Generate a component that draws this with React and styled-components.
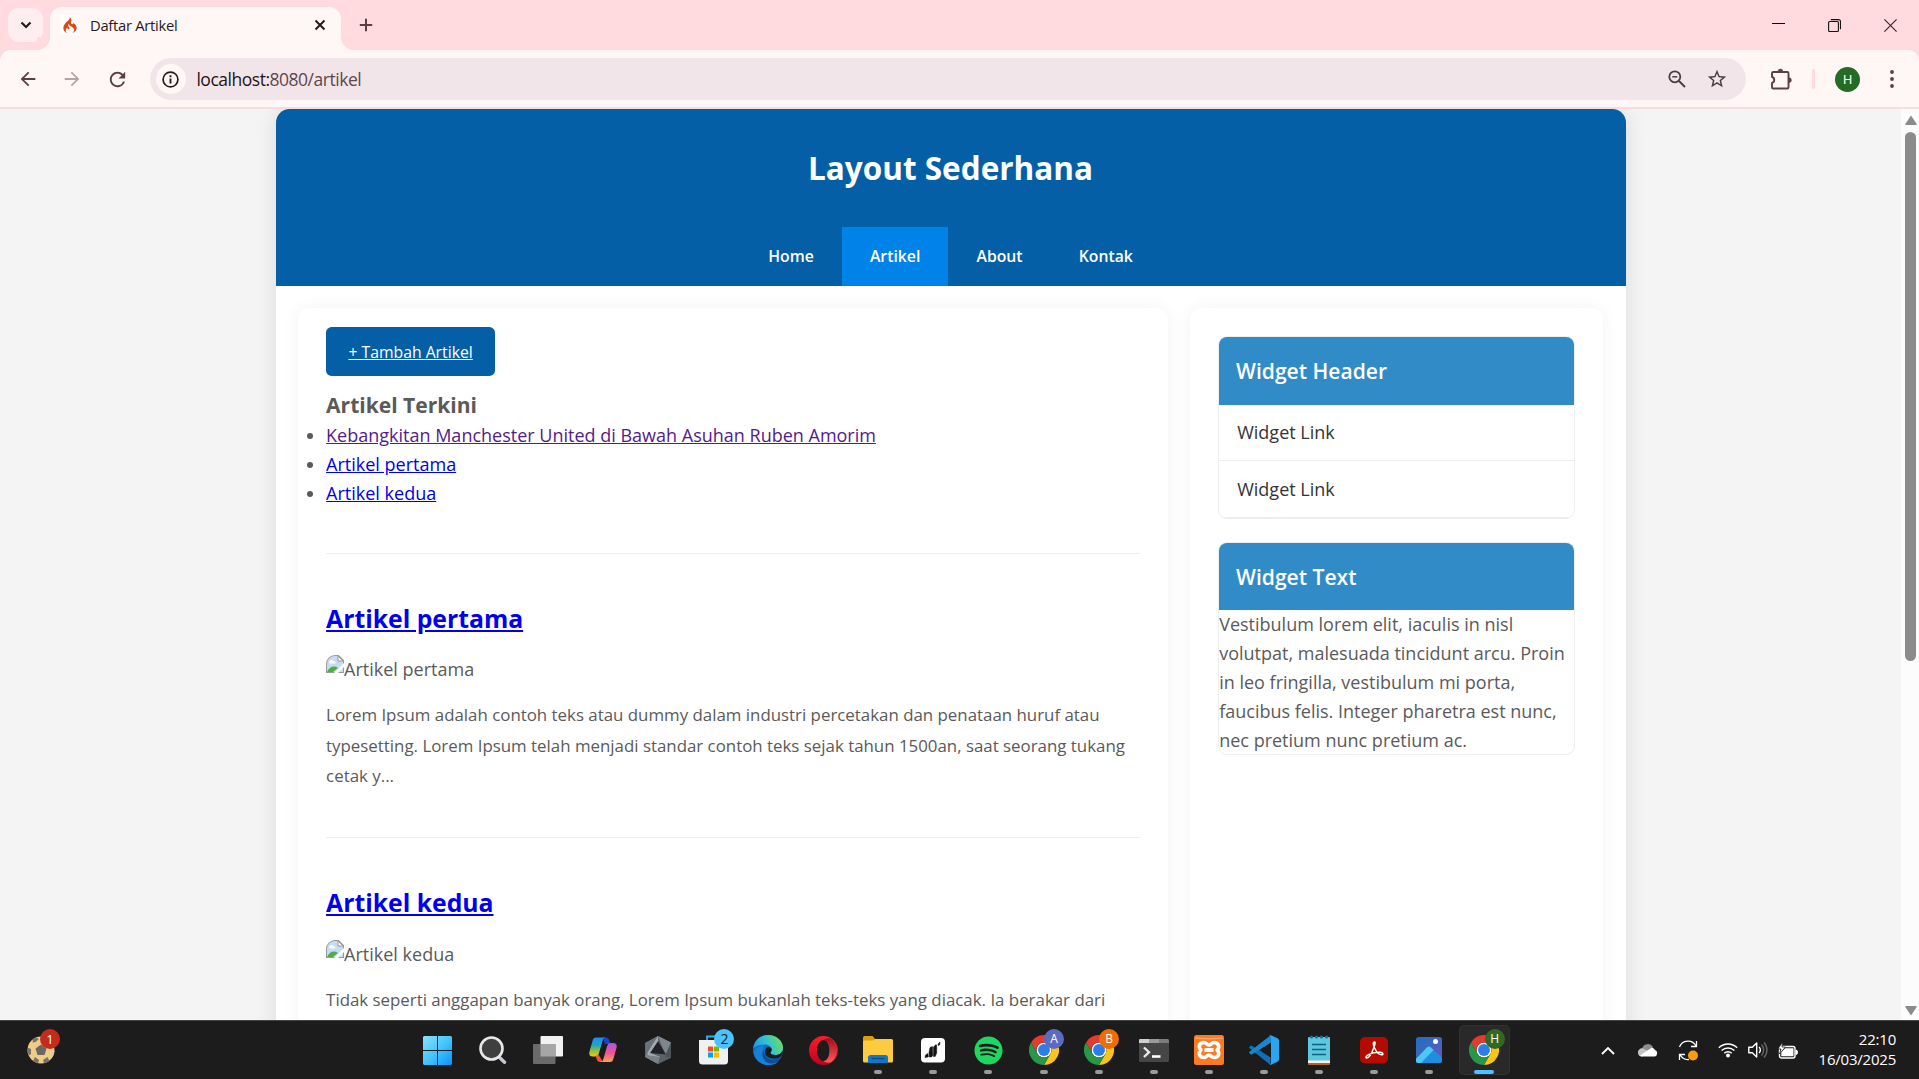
import React from "react";
import styled, { createGlobalStyle } from "styled-components";
import { SiCodeigniter } from "react-icons/si";
import { FaSpotify } from "react-icons/fa";

const GlobalStyle = createGlobalStyle`
  * { box-sizing: border-box; margin: 0; padding: 0; }
  html, body { height: 100%; overflow: hidden; }
  body { font-family: "Open Sans", "Noto Sans", sans-serif; background: #f4f4f4; }
  #root { height: 100vh; }
  svg { display: block; flex: none; }
`;

const Screen = styled.div`
  display: flex;
  flex-direction: column;
  width: 1919px;
  height: 1079px;
  overflow: hidden;
`;

/* ---------- browser chrome ---------- */

const TabStrip = styled.div`
  display: flex;
  align-items: center;
  height: 50px;
  padding-left: 8px;
  background: #ffdade;
  flex: none;
`;

const TabSearch = styled.div`
  display: grid;
  place-items: center;
  width: 35px;
  height: 34px;
  border-radius: 11px;
  background: #ffeef0;
`;

const Tab = styled.div`
  position: relative;
  display: flex;
  align-items: center;
  align-self: flex-end;
  width: 291px;
  height: 43px;
  margin-left: 7px;
  padding: 0 15px 7px 10px;
  border-radius: 12px 12px 0 0;
  background: #fff7f6;

  &::before,
  &::after {
    content: "";
    position: absolute;
    bottom: 0;
    width: 13px;
    height: 13px;
  }
  &::before {
    left: -13px;
    background: radial-gradient(circle at 0 0, #ffdade 12.5px, #fff7f6 13.5px);
  }
  &::after {
    right: -13px;
    background: radial-gradient(circle at 100% 0, #ffdade 12.5px, #fff7f6 13.5px);
  }
`;

const Favicon = styled.div`
  display: grid;
  place-items: center;
  width: 20px;
  height: 20px;
  background: #fff;
  color: #dd4814;
`;

const TabTitle = styled.span`
  flex: 1;
  margin-left: 10px;
  color: #2a1a1d;
  font-size: 14.8px;
  line-height: 20px;
  letter-spacing: -0.3px;
`;

const NewTab = styled.div`
  display: grid;
  place-items: center;
  width: 28px;
  height: 28px;
  margin-left: 11px;
`;

const WindowButtons = styled.div`
  display: flex;
  margin-left: auto;
`;

const WindowButton = styled.div`
  display: grid;
  place-items: center;
  width: ${(p) => p.$w || 57}px;
  height: 50px;
`;

const ToolbarBack = styled.div`
  flex: none;
  background: #ffdade;
`;

const Toolbar = styled.div`
  display: flex;
  align-items: center;
  height: 59px;
  padding: 1px 15px 0 16px;
  border-bottom: 2px solid #f8dcdf;
  border-radius: 11px 11px 0 0;
  background: #fff7f6;
`;

const ToolIcon = styled.div`
  display: grid;
  place-items: center;
  width: 24px;
  height: 24px;
  margin-left: ${(p) => p.$ml || 0}px;
`;

const Omnibox = styled.div`
  display: flex;
  align-items: center;
  width: 1598px;
  height: 42px;
  margin-left: 20px;
  padding: 0 17px 0 6px;
  border-radius: 21px;
  background: #f2e5e9;
`;

const SiteInfo = styled.div`
  display: grid;
  place-items: center;
  width: 30px;
  height: 30px;
  border-radius: 50%;
  background: #fff7f6;
`;

const Url = styled.span`
  flex: 1;
  margin-left: 10.5px;
  color: #5e474c;
  font-size: 17.5px;
  line-height: 24px;
  letter-spacing: -0.48px;
  b { color: #1f1416; font-weight: 400; }
`;

const Divider = styled.div`
  width: 3px;
  height: 20px;
  margin-left: 19px;
  border-radius: 2px;
  background: #ffdade;
`;

const Avatar = styled.div`
  display: grid;
  place-items: center;
  width: 25px;
  height: 25px;
  margin-left: 20px;
  border-radius: 50%;
  background: #246b25;
  color: #fff;
  font: 400 13px/25px Roboto, sans-serif;
`;

/* ---------- web page ---------- */

const Viewport = styled.div`
  display: flex;
  height: 911px;
  flex: none;
  overflow: hidden;
  background: #f4f4f4;
`;

const PageBody = styled.div`
  flex: 1;
  display: flex;
  justify-content: center;
  align-items: flex-start;
  overflow: hidden;
  color: #5a5a5a;
  font-size: 18px;
  line-height: 28.8px;
`;

const Container = styled.div`
  width: 1350px;
  height: 1200px;
  flex: none;
  border-radius: 13.5px;
  background: #fff;
  box-shadow: 0 0 22.5px rgba(0, 0, 0, 0.1);
  overflow: hidden;
`;

const PageHeader = styled.header`
  height: 177px;
  padding-top: 33.4px;
  background: #045fa7;
  text-align: center;
`;

const SiteTitle = styled.h1`
  height: 84.6px;
  color: #fff;
  font-size: 31.5px;
  line-height: 51.8px;
  font-weight: 700;
`;

const Nav = styled.nav`
  display: flex;
  justify-content: center;
`;

const NavLink = styled.a`
  height: 59px;
  padding: 0 28.1px;
  background: ${(p) => (p.$active ? "#0083e8" : "transparent")};
  color: #fff;
  font-size: 15.75px;
  line-height: 59px;
  font-weight: 600;
`;

const Columns = styled.div`
  display: grid;
  grid-template-columns: 869.6px 412.9px;
  gap: 22.5px;
  padding: 22px 22.5px;
`;

const Card = styled.section`
  height: 1000px;
  padding: ${(p) => p.$top}px 28.1px 0;
  border-radius: 11px;
  background: #fff;
  box-shadow: 0 0 16.9px rgba(0, 0, 0, 0.05);
`;

const AddButton = styled.a`
  display: block;
  width: 169px;
  height: 49px;
  border-radius: 5.6px;
  background: #045fa7;
  color: #fff;
  font-size: 15.75px;
  line-height: 50px;
  text-align: center;
  text-decoration: underline;
`;

const RecentTitle = styled.h3`
  margin-top: 13.4px;
  font-size: 21.06px;
  line-height: 31.8px;
  font-weight: 700;
`;

const RecentList = styled.ul`
  list-style: disc;
`;

const Link = styled.a`
  color: ${(p) => (p.$visited ? "#551a8b" : "#0000ee")};
  text-decoration: underline;
`;

const Rule = styled.hr`
  height: 1px;
  margin: 45.4px 0 45px;
  border: 0;
  background: #eee;
`;

const ArticleTitle = styled.h2`
  font-size: 24.75px;
  line-height: 40.3px;
  font-weight: 700;
`;

const BrokenImage = styled.div`
  display: flex;
  margin-top: 15.9px;
  height: 28.8px;
`;

const Excerpt = styled.p`
  margin-top: 16.5px;
  font-size: 16.875px;
  line-height: 30.5px;
`;

const Widget = styled.div`
  margin-bottom: 22.5px;
  border: 1px solid #eee;
  border-radius: 9px;
  overflow: hidden;
`;

const WidgetTitle = styled.h3`
  height: 67.5px;
  padding: 16.9px;
  background: #318bc7;
  color: #fff;
  font-size: 21.06px;
  line-height: 34.2px;
  font-weight: 600;
`;

const WidgetLink = styled.a`
  display: block;
  height: 56.9px;
  padding: 13.5px 18px;
  border-bottom: 1px solid #eee;
  color: #333;
`;

const Scrollbar = styled.div`
  display: flex;
  flex-direction: column;
  align-items: center;
  width: 18px;
  padding: 6px 0 4px 1px;
  background: #fcfcfc;
`;

const Thumb = styled.div`
  width: 11px;
  height: 529px;
  margin: 7px 0 auto;
  border-radius: 6px;
  background: #8b8b8b;
`;

/* ---------- taskbar ---------- */

const Taskbar = styled.div`
  display: flex;
  align-items: center;
  flex: 1;
  border-top: 1px solid #434343;
  background: #1c1c1c;
  color: #fff;
`;

const NewsSlot = styled.div`
  position: relative;
  width: 30px;
  margin-left: 27px;
`;

const Apps = styled.div`
  display: flex;
  margin-left: 353px;
`;

const AppButton = styled.div`
  position: relative;
  display: grid;
  place-items: center;
  width: 51.1px;
  height: 50px;
  margin: 0 2px;
  border-radius: 5px;
  background: ${(p) => (p.$active ? "#292929" : "transparent")};
  box-shadow: ${(p) => (p.$active ? "inset 0 0 0 1px #313131" : "none")};

  &::after {
    content: "";
    position: absolute;
    bottom: 1px;
    left: 50%;
    width: ${(p) => (p.$active ? 20 : 8)}px;
    height: 4px;
    border-radius: 2px;
    transform: translateX(-50%);
    display: ${(p) => (p.$running || p.$active ? "block" : "none")};
    background: ${(p) => (p.$active ? "#4cc2ff" : "#9a9a9a")};
  }
`;

const Badge = styled.span`
  position: absolute;
  top: ${(p) => p.$top}px;
  left: ${(p) => p.$left}px;
  width: 20px;
  height: 20px;
  border-radius: 50%;
  background: ${(p) => p.$bg};
  color: ${(p) => p.$fg || "#fff"};
  font: 400 ${(p) => p.$size || 12}px/20px "Open Sans", sans-serif;
  text-align: center;
`;

const Tray = styled.div`
  display: flex;
  align-items: center;
  margin-left: auto;
  padding-right: 23px;
`;

const TrayIcon = styled.div`
  display: grid;
  place-items: center;
  width: ${(p) => p.$w}px;
`;

const Clock = styled.div`
  width: 88px;
  padding-bottom: 2px;
  font-size: 15px;
  line-height: 20px;
  letter-spacing: -0.22px;
  text-align: right;
  white-space: nowrap;
`;

/* ---------- icons ---------- */

const INK = "#5b3f45";

const BrokenImageIcon = () => (
  <svg width="18" height="18" viewBox="0 0 18 18">
    <defs>
      <clipPath id="round"><path d="M0 9a9 9 0 0 1 9-9h4l5 5v13H0z" /></clipPath>
    </defs>
    <g clipPath="url(#round)">
      <path d="M0 0h13l5 5v13H0z" fill="#9a9a9a" />
      <path d="M1 9a8 8 0 0 1 8-8h3l5 5v11H1z" fill="#c6dbf7" />
      <path d="M3 7.500c0-3 4-3.500 5-1 2 0 2 2 .5 2H3.500z" fill="#fff" />
      <path d="M1 17c2-5 7-7 11-4l-5 4z" fill="#4caf3f" />
      <path d="M12 1v5h5z" fill="#fff" stroke="#9a9a9a" />
      <path d="M8 18 18 8v4l-6 6z" fill="#fff" />
    </g>
  </svg>
);

const ChromeIcon = () => (
  <svg width="30" height="30" viewBox="0 0 48 48">
    <circle cx="24" cy="24" r="12" fill="#fff" />
    <path d="M24 12H44.780a23.990 23.990 0 0 0-41.560 0L13.608 30l.009-.002A11.985 11.985 0 0 1 24 12Z" fill="#e33b2e" />
    <path d="M34.391 30.003 24 48A23.994 23.994 0 0 0 44.780 12.003H24A11.985 11.985 0 0 1 34.391 30.003Z" fill="#fcc419" />
    <path d="M13.609 30.003 3.218 12.006A23.994 23.994 0 0 0 24.002 48L34.393 30.003a11.985 11.985 0 0 1-20.784 0Z" fill="#279847" />
    <circle cx="24" cy="24" r="9.500" fill="#2b7de9" />
  </svg>
);

const StartIcon = () => (
  <svg width="29" height="29" viewBox="0 0 29 29">
    <defs>
      <linearGradient id="win" x1="0" y1="0" x2="29" y2="29" gradientUnits="userSpaceOnUse">
        <stop offset="0" stopColor="#8be0fc" />
        <stop offset="0.5" stopColor="#45c6fb" />
        <stop offset="1" stopColor="#0a93fb" />
      </linearGradient>
    </defs>
    <path d="M1 0h13v14H0V1zM15 0h13l1 1v13H15zM0 15h14v14H1l-1-1zM15 15h14v13l-1 1H15z" fill="url(#win)" />
  </svg>
);

const SearchIcon = () => (
  <svg width="28" height="28" viewBox="0 0 28 28">
    <path d="m19 20 6.500 6.300" stroke="#c4c8cf" strokeWidth="3.400" strokeLinecap="round" />
    <circle cx="12.500" cy="12.500" r="11" fill="#3f3f3f" stroke="#e6e8eb" strokeWidth="2.600" />
  </svg>
);

const TaskViewIcon = () => (
  <svg width="30" height="28" viewBox="0 0 30 28">
    <rect x="7.500" y="0" width="22.500" height="20.500" rx="1" fill="#f2f2f2" />
    <rect x="0" y="8" width="22.500" height="20" rx="1" fill="#6a6a6a" />
    <path d="M7.500 8h15v12.500h-15z" fill="#a6a6a6" />
  </svg>
);

const CopilotIcon = () => (
  <svg width="28" height="26" viewBox="0 0 28 26">
    <defs>
      <linearGradient id="cpA" x1="0" y1="0" x2="0" y2="1">
        <stop offset="0.050" stopColor="#1c8ff0" />
        <stop offset="0.400" stopColor="#21a5c4" />
        <stop offset="0.650" stopColor="#7bbf49" />
        <stop offset="1" stopColor="#f5c816" />
      </linearGradient>
      <linearGradient id="cpB" x1="0" y1="0" x2="0" y2="1">
        <stop offset="0" stopColor="#a955ea" />
        <stop offset="0.500" stopColor="#ea5595" />
        <stop offset="1" stopColor="#fda052" />
      </linearGradient>
    </defs>
    <path d="M14 .5h3c2 0 3 1.500 3.500 3.500L21.500 7H16z" fill="#1c42cf" />
    <path d="M7 .5h10c-2 0-2.800 1-3.500 3.500L10 16c-.8 2.500-1.800 3.500-4 3.500H3.500C1 19.500-.3 17.500.5 14.500L3.500 4C4.200 1.500 5 .5 7 .5z" fill="url(#cpA)" />
    <path d="M14 25h-3c-2 0-3-1.500-3.500-3.500L6.500 19l3-1.500z" fill="#f2552d" />
    <path d="M21 25H11c2 0 2.800-1 3.500-3.500L18 9.500C18.800 7 19.800 6 22 6h2.500c2.500 0 3.800 2 3 5l-3 10.500c-.7 2.500-1.500 3.500-3.500 3.500z" fill="url(#cpB)" />
  </svg>
);

const HexIcon = () => (
  <svg width="26" height="28" viewBox="0 0 26 28">
    <path d="M13 0 26 6.500v15L13 28 0 21V7z" fill="#5c646b" />
    <path d="M13 0 0 7l1 13z" fill="#6a7279" />
    <path d="M13 0 26 6.500 20.500 19z" fill="#7e868d" />
    <path d="M26 6.500v15L18 25l3-7z" fill="#4b5259" />
    <path d="M0 21 13 28l2-7.500L1 18z" fill="#7a8289" />
    <path d="M13 28 26 21.500 16 20z" fill="#596067" />
    <path d="M13 5 21 18.500 5 17z" fill="#1f2327" />
    <path d="M13 0 2.500 16.500Q1.500 19 4.500 19.500l11 1.500L5 17l8-12z" fill="#a3abb2" />
  </svg>
);

const StoreIcon = () => (
  <svg width="29" height="30" viewBox="0 0 29 30">
    <path d="M8 6V1.500h12V6" fill="none" stroke="#2bb3e8" strokeWidth="1.800" />
    <path d="M0 5h29v21a3.500 3.500 0 0 1-3.500 3.500h-22A3.500 3.500 0 0 1 0 26z" fill="#f0f0f0" />
    <path d="M9 11.500h5v5H9z" fill="#f25022" />
    <path d="M15 11.500h5v5h-5z" fill="#7fba00" />
    <path d="M9 17.500h5v5H9z" fill="#00a4ef" />
    <path d="M15 17.500h5v5h-5z" fill="#ffb900" />
  </svg>
);

const EdgeIcon = () => (
  <svg width="30" height="30" viewBox="0 0 30 30">
    <defs>
      <linearGradient id="edA" x1="0" y1="0.600" x2="1" y2="0.300">
        <stop offset="0" stopColor="#1a94e0" />
        <stop offset="0.450" stopColor="#31c0d8" />
        <stop offset="1" stopColor="#6ae05a" />
      </linearGradient>
    </defs>
    <circle cx="15" cy="15" r="15" fill="#0f6fc6" />
    <path d="M0 14C1 5.500 7 0 15 0c9 0 15 6.200 15 12.500 0 5-3.500 7.500-7.500 7.500-3 0-5-1-5-2 0-.8 1.200-1.300 1.200-3.500 0-2.800-2.800-5-6.700-5C6 9.500 1 12 0 14z" fill="url(#edA)" />
    <path d="M10 15c-1.500 8 4 13 10 13 2.500 0 5-1 6-2-3 3.500-7 4-11 4C8 30 2 25 1 18c1-5 6-8 11-8.300-1 .8-1.700 2.500-2 5.300z" fill="#1580d4" />
    <path d="M11.500 14c-1.500 6 3 11 9 10.500 3-.2 5.500-1.500 6.500-2-1.500 4-5 6-8.500 6-5.500 0-10-5-8.800-11 .3-1.500 1-2.800 1.800-3.500z" fill="#0b4f9e" />
    <path d="M18.700 14.500c0 2.200-1.200 2.700-1.200 3.500 0 1 2 2 5 2 3 0 6-1.500 7-4.500l.5 3-2.500 3.500c-6 3-16 2-15.500-6 .2-2.500 1.800-4 3.500-4 2 0 3.200 1.200 3.200 2.500z" fill="#1c1c1c" />
  </svg>
);

const OperaIcon = () => (
  <svg width="29" height="29" viewBox="0 0 29 29">
    <defs>
      <linearGradient id="op" x1="0" y1="0" x2="0" y2="1">
        <stop offset="0" stopColor="#ff1b2d" />
        <stop offset="1" stopColor="#b9031d" />
      </linearGradient>
      <linearGradient id="op2" x1="0" y1="0" x2="0" y2="1">
        <stop offset="0" stopColor="#a30d1c" />
        <stop offset="1" stopColor="#ff5a56" />
      </linearGradient>
    </defs>
    <path fillRule="evenodd" d="M14.500 0a14.500 14.500 0 1 0 0 29 14.500 14.500 0 0 0 0-29zm0 4c3.500 0 6 4.500 6 10.500S18 25 14.500 25s-6.500-4.500-6.500-10.500S11 4 14.500 4z" fill="url(#op)" />
    <path d="M14.500 4c2-1.600 5-2 7.500-1.300a14.500 14.500 0 0 1 0 23.600c-2.500.8-5.500.3-7.500-1.300 3.500 0 6-4.500 6-10.500S18 4 14.500 4z" fill="url(#op2)" />
  </svg>
);

const FolderIcon = () => (
  <svg width="30" height="28" viewBox="0 0 30 28">
    <path d="M0 1.500Q0 0 1.500 0h8l3 3.500V8H0z" fill="#d99e09" />
    <path d="M0 6q0-1.500 1.500-1.500H10l2.500-1.500h16Q30 3 30 4.500V25q0 1.500-1.500 1.500h-27Q0 26.500 0 25z" fill="#fdcb3f" />
    <path d="M5 27v-5.500Q5 19 7.500 19h15q2.500 0 2.500 2.500V27z" fill="#1277c9" />
    <path d="M8.500 22.500h13" stroke="#0b4c85" strokeWidth="1.400" />
  </svg>
);

const ChartIcon = () => (
  <svg width="24" height="25" viewBox="0 0 24 25">
    <rect width="24" height="24.500" rx="4" fill="#fff" />
    <path d="M4 19.500 4.500 17 7 15.500l.3 3.500zM8.300 19l-.3-4.500 1-5 2.500-1 .3 9-1.300 1.500zM12.500 18.500V9l2.500-2.500.7 1V15l-1.500 3.500zM17.200 7.500 17 6l2-2-.3 3z" fill="#111" stroke="#111" strokeWidth="0.500" strokeLinejoin="round" />
  </svg>
);

const TerminalIcon = () => (
  <svg width="30" height="23" viewBox="0 0 30 23">
    <rect width="30" height="23" rx="1.500" fill="#464646" />
    <path d="M1.500 0h27Q30 0 30 1.500V4H0V1.500Q0 0 1.500 0z" fill="#7c7c7c" />
    <path d="M0 1.500Q0 0 1.500 0H20v4H0z" fill="#9a9a9a" />
    <path d="M0 1.500Q0 0 1.500 0H10v4H0z" fill="#cfcfcf" />
    <path d="m5 8.500 5 4.700-5 4.800" fill="none" stroke="#e8e8e8" strokeWidth="2.400" />
    <path d="M13 17.500h8.500" stroke="#fff" strokeWidth="2.600" />
  </svg>
);

const XamppIcon = () => (
  <svg width="30" height="30" viewBox="0 0 30 30">
    <rect width="30" height="30" rx="2.500" fill="#fb7a24" />
    <path d="M1.500 3Q15 4.500 28.500 3" stroke="#fda465" strokeWidth="1.600" fill="none" />
    <path d="M10 7.500c2.500 0 3 2.500 5 2.500s2.500-2.500 5-2.500c5 0 6 5 3 7.500 3 2.500 2 7.500-3 7.500-2.500 0-3-2.500-5-2.500s-2.500 2.500-5 2.500c-5 0-6-5-3-7.500-3-2.500-2-7.500 3-7.500z" fill="none" stroke="#fff" strokeWidth="3.600" strokeLinejoin="round" />
    <path d="M10.500 15h9" stroke="#fff" strokeWidth="4" />
  </svg>
);

const CodeIcon = () => (
  <svg width="30" height="30" viewBox="0 0 30 30">
    <path d="M22 0 7.500 14 3 10.700q-.8-.5-1.500 0l-1 1q-.8.8 0 1.600l21 16.700V22.500L10 15l12-8z" fill="#0f6fb8" />
    <path d="m.5 18.300 1 1q.7.600 1.500 0L22 7.500V0L.5 16.700q-.8.800 0 1.600z" fill="#1b86d0" />
    <path d="M20.500.8q.8-.8 2-.3l6 2.800Q30 4 30 5.500v19q0 1.500-1.500 2.200l-6 2.800q-1.200.5-2-.3l1.500-1V1.800z" fill="#2ba5ee" />
  </svg>
);

const NotepadIcon = () => (
  <svg width="22" height="30" viewBox="0 0 22 30">
    <path d="M0 26h22v3q0 1-1 1H1q-1 0-1-1z" fill="#b8641b" />
    <path d="M0 3q0-1 1-1h20q1 0 1 1v24H0z" fill="#5fc6e0" />
    <path d="M0 25.500h22V28H0z" fill="#f4f4f4" />
    <path d="M4 9.500h14M4 14.500h14M4 19.500h14" stroke="#0b6480" strokeWidth="1.700" />
    <g fill="#0c7699"><circle cx="3.500" cy="2" r="1.600" /><circle cx="8.500" cy="2" r="1.600" /><circle cx="13.500" cy="2" r="1.600" /><circle cx="18.500" cy="2" r="1.600" /></g>
  </svg>
);

const AcrobatIcon = () => (
  <svg width="28" height="27" viewBox="0 0 28 27">
    <rect width="28" height="26.500" rx="5" fill="#b30b00" />
    <path d="M14.500 5c-1.800 0-1.500 3 .3 6.500 2 4 5 6.300 7 6.300 1.700 0 1.600-2.300-1.800-2.500-4-.2-8.500.9-11.500 2.400-3 1.500-3 3.300-1.700 3.300 2 0 5-5 6.700-9.500C14.700 8 15.800 5 14.500 5z" fill="none" stroke="#fff" strokeWidth="1.500" />
  </svg>
);

const PhotosIcon = () => (
  <svg width="26" height="26" viewBox="0 0 26 26">
    <defs>
      <linearGradient id="ph" x1="0" y1="0" x2="1" y2="1">
        <stop offset="0" stopColor="#1e6fc4" />
        <stop offset="1" stopColor="#6a58b8" />
      </linearGradient>
      <clipPath id="phc"><rect width="26" height="26" rx="2.500" /></clipPath>
    </defs>
    <g clipPath="url(#phc)">
      <rect width="26" height="26" fill="url(#ph)" />
      <path d="M0 22 11 10.500q2-2 4 0L26 21v5H0z" fill="#1e8fe0" />
      <path d="M0 22 11 10.500q2-2 4 0l2.500 2.500L5 26H0z" fill="#4cc8f7" />
      <circle cx="19.500" cy="4.500" r="2.500" fill="#fff" />
    </g>
  </svg>
);

const BallIcon = () => (
  <svg width="28" height="28" viewBox="0 0 28 28">
    <circle cx="14" cy="14" r="13.500" fill="#efcd85" />
    <path d="m14 8.500 5.500 4-2 6.500h-7l-2-6.500z" fill="#6b6764" />
    <path d="M.7 11.500 4 13v5l-2 1.500A13.500 13.500 0 0 1 .7 11.500zM6 25l2-4 4 3-1 3.200A13.500 13.500 0 0 1 6 25zM17 27.200 16 24l4.500-3 2 4a13.500 13.500 0 0 1-5.500 2.200zM6 3l3-1.500 3 1.500-3.500 3-3 .5z" fill="#77716b" />
    <path d="M24 13q3 1 3.500 2-.8 5-3.500 8z" fill="#d6cdb8" />
  </svg>
);

const apps = [
  { icon: <StartIcon /> },
  { icon: <SearchIcon /> },
  { icon: <TaskViewIcon /> },
  { icon: <CopilotIcon /> },
  { icon: <HexIcon /> },
  { icon: <StoreIcon />, badge: { $bg: "#4cc2ff", $fg: "#10222c", text: "2", $size: 14, $left: 27, $top: 4 } },
  { icon: <EdgeIcon /> },
  { icon: <OperaIcon /> },
  { icon: <FolderIcon />, run: true },
  { icon: <ChartIcon />, run: true },
  { icon: <FaSpotify size={29} color="#1ed760" />, run: true },
  { icon: <ChromeIcon />, run: true, badge: { $bg: "#5c6bc0", text: "A", $left: 26, $top: 4 } },
  { icon: <ChromeIcon />, run: true, badge: { $bg: "#ef6c00", text: "B", $left: 26, $top: 4 } },
  { icon: <TerminalIcon />, run: true },
  { icon: <XamppIcon />, run: true },
  { icon: <CodeIcon />, run: true },
  { icon: <NotepadIcon />, run: true },
  { icon: <AcrobatIcon />, run: true },
  { icon: <PhotosIcon />, run: true },
  { icon: <ChromeIcon />, active: true, badge: { $bg: "#33691e", text: "H", $left: 26, $top: 4 } },
];

function BrowserChrome() {
  return (
    <>
      <TabStrip>
        <TabSearch>
          <svg width="12" height="8" viewBox="0 0 12 8"><path d="m1.500 1.500 4.500 4.500 4.500-4.500" fill="none" stroke="#2a1a1d" strokeWidth="2.200" /></svg>
        </TabSearch>
        <Tab>
          <Favicon><SiCodeigniter size={16} /></Favicon>
          <TabTitle>Daftar Artikel</TabTitle>
          <svg width="12" height="12" viewBox="0 0 12 12"><path d="m1.500 1.500 9 9m0-9-9 9" stroke="#2a1a1d" strokeWidth="2" /></svg>
        </Tab>
        <NewTab>
          <svg width="14" height="14" viewBox="0 0 14 14"><path d="M7 .8v12.400M.8 7h12.400" stroke={INK} strokeWidth="2" /></svg>
        </NewTab>
        <WindowButtons>
          <WindowButton $w={56}><svg width="13" height="13" viewBox="0 0 13 13"><path d="M0 4.500h13" stroke="#000" /></svg></WindowButton>
          <WindowButton $w={56}>
            <svg width="13" height="13" viewBox="0 0 13 13" fill="none" stroke="#111" strokeWidth="1.100">
              <rect x="0.600" y="2.500" width="9.800" height="10" rx="1" />
              <path d="M2.800.6h7.700q2 0 2 2v7.700" />
            </svg>
          </WindowButton>
          <WindowButton><svg width="13" height="13" viewBox="0 0 13 13"><path d="m.4.400 12.200 12.200m0-12.200L.4 12.600" stroke="#3a2a2d" strokeWidth="1.200" /></svg></WindowButton>
        </WindowButtons>
      </TabStrip>
      <ToolbarBack>
        <Toolbar>
          <ToolIcon>
            <svg width="22" height="22" viewBox="0 0 24 24" fill={INK}><path d="M20 11H7.830l5.590-5.590L12 4l-8 8 8 8 1.410-1.410L7.830 13H20v-2z" /></svg>
          </ToolIcon>
          <ToolIcon $ml={20}>
            <svg width="22" height="22" viewBox="0 0 24 24" fill="#b5a5a8"><path d="m12 4-1.410 1.410L16.170 11H4v2h12.170l-5.580 5.590L12 20l8-8z" /></svg>
          </ToolIcon>
          <ToolIcon $ml={22}>
            <svg width="23" height="23" viewBox="0 0 24 24" fill={INK}><path d="M17.650 6.350A7.958 7.958 0 0 0 12 4c-4.420 0-7.990 3.580-7.990 8s3.570 8 7.990 8c3.730 0 6.840-2.550 7.730-6h-2.080A5.990 5.990 0 0 1 12 18c-3.310 0-6-2.690-6-6s2.690-6 6-6c1.660 0 3.140.69 4.220 1.780L13 11h7V4l-2.350 2.350z" /></svg>
          </ToolIcon>
          <Omnibox>
            <SiteInfo>
              <svg width="17" height="17" viewBox="0 0 17 17"><circle cx="8.500" cy="8.500" r="7.400" fill="none" stroke="#2a1a1d" strokeWidth="1.700" /><path d="M8.500 7.500v5M8.500 4.300v1.900" stroke="#2a1a1d" strokeWidth="1.900" /></svg>
            </SiteInfo>
            <Url><b>localhost:</b>8080/artikel</Url>
            <ToolIcon>
              <svg width="18" height="18" viewBox="0 0 18 18" fill="none" stroke="#4d3b40"><circle cx="6.800" cy="6.800" r="5.500" strokeWidth="1.800" /><path d="m11 11 6 6" strokeWidth="2" /><path d="M4.300 6.800h5" strokeWidth="1.500" /></svg>
            </ToolIcon>
            <ToolIcon $ml={16}>
              <svg width="22" height="22" viewBox="0 0 24 24" fill="#4d3b40"><path d="m22 9.240-7.190-.62L12 2 9.190 8.630 2 9.240l5.460 4.730L5.820 21 12 17.270 18.180 21l-1.630-7.030L22 9.240zM12 15.400l-3.760 2.270 1-4.280-3.320-2.880 4.380-.38L12 6.100l1.710 4.040 4.380.38-3.320 2.880 1 4.280L12 15.400z" /></svg>
            </ToolIcon>
          </Omnibox>
          <ToolIcon $ml={23}>
            <svg width="22" height="22" viewBox="0 0 22 22"><path d="M2 9V5.200q0-1.200 1.200-1.200h14q1.300 0 1.300 1.200v14q0 1.300-1.300 1.300h-14Q2 20.500 2 19.200v-4.400a3 3 0 0 0 0-5.800z" fill="none" stroke={INK} strokeWidth="1.900" strokeLinejoin="round" /><path d="M8 3.500a2.400 2.400 0 0 1 4.800 0zM19 9.800a2.400 2.400 0 0 1 0 4.800z" fill={INK} stroke={INK} strokeWidth="0.600" /></svg>
          </ToolIcon>
          <Divider />
          <Avatar>H</Avatar>
          <ToolIcon $ml={20}>
            <svg width="4" height="18" viewBox="0 0 4 18" fill={INK}><circle cx="2" cy="2" r="1.900" /><circle cx="2" cy="9" r="1.900" /><circle cx="2" cy="16" r="1.900" /></svg>
          </ToolIcon>
        </Toolbar>
      </ToolbarBack>
    </>
  );
}

function Article({ title, children }) {
  return (
    <article>
      <Rule />
      <ArticleTitle><Link href="#">{title}</Link></ArticleTitle>
      <BrokenImage><BrokenImageIcon /><span>{title}</span></BrokenImage>
      <Excerpt>{children}</Excerpt>
    </article>
  );
}

function WebPage() {
  return (
    <Viewport>
      <PageBody>
        <Container>
          <PageHeader>
            <SiteTitle>Layout Sederhana</SiteTitle>
            <Nav>
              <NavLink>Home</NavLink>
              <NavLink $active>Artikel</NavLink>
              <NavLink>About</NavLink>
              <NavLink>Kontak</NavLink>
            </Nav>
          </PageHeader>
          <Columns>
            <Card $top={19}>
              <AddButton>+ Tambah Artikel</AddButton>
              <RecentTitle>Artikel Terkini</RecentTitle>
              <RecentList>
                <li><Link $visited>Kebangkitan Manchester United di Bawah Asuhan Ruben Amorim</Link></li>
                <li><Link>Artikel pertama</Link></li>
                <li><Link>Artikel kedua</Link></li>
              </RecentList>
              <Article title="Artikel pertama">
                Lorem Ipsum adalah contoh teks atau dummy dalam industri percetakan dan penataan huruf atau typesetting. Lorem Ipsum telah menjadi standar contoh teks sejak tahun 1500an, saat seorang tukang cetak y...
              </Article>
              <Article title="Artikel kedua">
                Tidak seperti anggapan banyak orang, Lorem Ipsum bukanlah teks-teks yang diacak. Ia berakar dari
              </Article>
            </Card>
            <Card $top={28.1}>
              <Widget>
                <WidgetTitle>Widget Header</WidgetTitle>
                <WidgetLink>Widget Link</WidgetLink>
                <WidgetLink>Widget Link</WidgetLink>
              </Widget>
              <Widget>
                <WidgetTitle>Widget Text</WidgetTitle>
                <p>Vestibulum lorem elit, iaculis in nisl volutpat, malesuada tincidunt arcu. Proin in leo fringilla, vestibulum mi porta, faucibus felis. Integer pharetra est nunc, nec pretium nunc pretium ac.</p>
              </Widget>
            </Card>
          </Columns>
        </Container>
      </PageBody>
      <Scrollbar>
        <svg width="12" height="10" viewBox="0 0 12 10"><path d="M6 .5 11.700 9q.3 1-.7 1H1q-1 0-.7-1z" fill="#8b8b8b" /></svg>
        <Thumb />
        <svg width="12" height="10" viewBox="0 0 12 10"><path d="M6 9.500 11.700 1q.3-1-.7-1H1Q0 0 .3 1z" fill="#8b8b8b" /></svg>
      </Scrollbar>
    </Viewport>
  );
}

export default function App() {
  return (
    <Screen>
      <GlobalStyle />
      <BrowserChrome />
      <WebPage />
      <Taskbar>
        <NewsSlot>
          <BallIcon />
          <Badge $bg="#c42b1c" $top={-7} $left={13} $size={13}>1</Badge>
        </NewsSlot>
        <Apps>
          {apps.map(({ icon, badge, run, active }, i) => (
            <AppButton key={i} $running={run} $active={active}>
              {icon}
              {badge && <Badge {...badge}>{badge.text}</Badge>}
            </AppButton>
          ))}
        </Apps>
        <Tray>
          <TrayIcon $w={40}>
            <svg width="14" height="9" viewBox="0 0 14 9"><path d="m1 8 6-6 6 6" fill="none" stroke="#fff" strokeWidth="1.900" /></svg>
          </TrayIcon>
          <TrayIcon $w={40}>
            <svg width="20" height="14" viewBox="0 0 20 14"><path d="M4 6a6 6 0 0 1 11-2l-5 5z" fill="#8e8e8e" /><path d="M0 10a4 4 0 0 1 5-4.500L12 9l-8 4.500A4 4 0 0 1 0 10z" fill="#c4c4c4" /><path d="M2 12.500 14 4.500a5 5 0 0 1 3 2.500 3.400 3.400 0 0 1-.5 6.500H4q-1.500 0-2-1z" fill="#fff" /></svg>
          </TrayIcon>
          <TrayIcon $w={40}>
            <svg width="20" height="21" viewBox="0 0 20 21" fill="none" stroke="#fff" strokeWidth="1.300"><path d="M1.500 7A9 9 0 0 1 18 6M18.500 1v5.500H13M11 19.500a9 9 0 0 1-9-5M1.500 20v-5.500H7" /><circle cx="15" cy="15.500" r="5" fill="#ff9a0a" stroke="none" /></svg>
          </TrayIcon>
          <TrayIcon $w={40}>
            <svg width="20" height="16" viewBox="0 0 20 16" fill="none" stroke="#fff" strokeWidth="1.400"><path d="M.8 5.800a13 13 0 0 1 18.400 0M3.600 8.600a9 9 0 0 1 12.800 0M6.300 11.300a5.200 5.200 0 0 1 7.400 0" /><circle cx="10" cy="13.500" r="2" fill="#fff" stroke="none" /></svg>
          </TrayIcon>
          <TrayIcon $w={20}>
            <svg width="20" height="18" viewBox="0 0 20 18" fill="none" stroke="#fff" strokeWidth="1.400"><path d="M.8 6.300h3.500L8.700 2v14l-4.400-4.300H.8z" strokeLinejoin="round" /><path d="M11 6a4 4 0 0 1 0 6" /><path d="M13.500 3.500a8 8 0 0 1 0 11M16 1.500a11 11 0 0 1 0 15" stroke="#666" /></svg>
          </TrayIcon>
          <TrayIcon $w={40}>
            <svg width="20" height="17" viewBox="0 0 20 17"><rect x="1.500" y="4.500" width="15.500" height="11.500" rx="2" fill="none" stroke="#fff" strokeWidth="1.400" /><path d="M7 6.300h8.500v8H3.300v-4z" fill="#fff" /><path d="M18 8v4.500q1.500 0 1.500-2.200T18 8z" fill="#fff" stroke="#fff" /><path d="M4.500 0 0 7h3l-1.500 5L7.500 5H4z" fill="#fff" stroke="#1c1c1c" strokeWidth="0.800" /></svg>
          </TrayIcon>
          <Clock>22:10<br />16/03/2025</Clock>
        </Tray>
      </Taskbar>
    </Screen>
  );
}
